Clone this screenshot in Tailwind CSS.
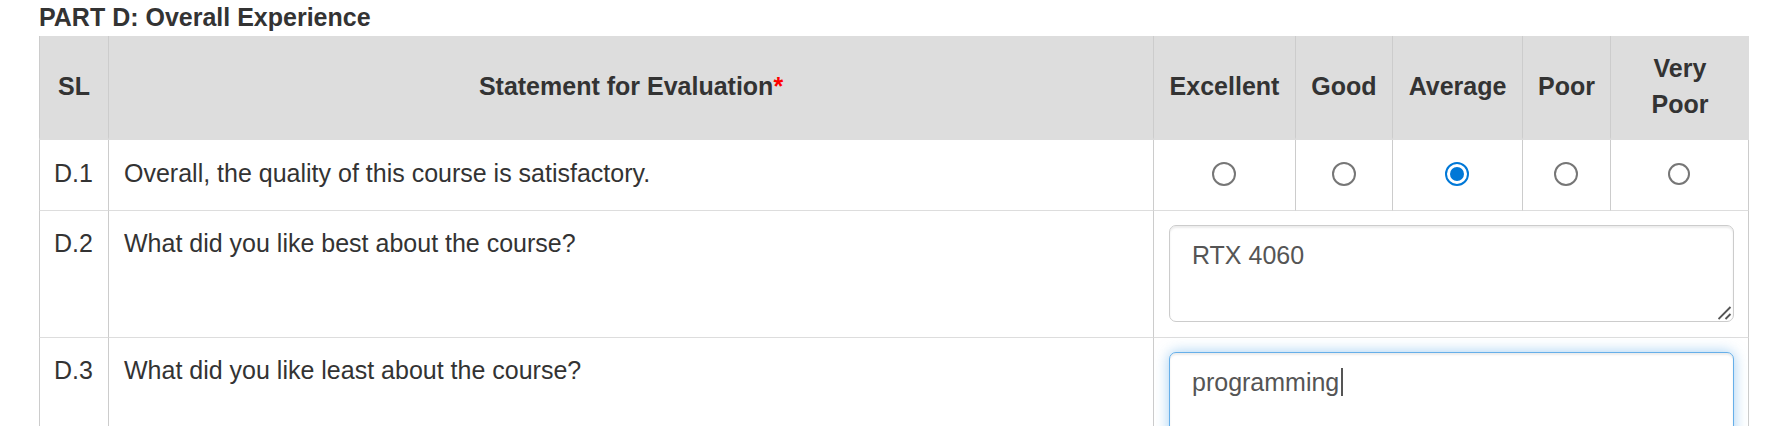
<!DOCTYPE html>
<html lang="en">
<head>
<meta charset="utf-8">
<title>Course Evaluation</title>
<script src="https://cdn.jsdelivr.net/npm/@tailwindcss/browser@4"></script>
</head>
<body class="h-screen overflow-hidden bg-white font-['Liberation_Sans',Arial,sans-serif] text-[25px] leading-9 text-[#333]">
<form class="pr-[41px] pl-[39px]">
  <h2 class="pb-0.5 leading-[34px] font-bold">PART D: Overall Experience</h2>
  <table class="w-full table-fixed border-separate border-spacing-0">
    <colgroup>
      <col class="w-[69px]"><col><col class="w-[142px]"><col class="w-[97px]"><col class="w-[130px]"><col class="w-[88px]"><col class="w-[139px]">
    </colgroup>
    <thead class="bg-[#ddd]">
      <tr>
        <th class="border-b-[3px] border-l border-b-[#ddd] border-l-[#ccc] pt-3.5 pb-[15px]">SL</th>
        <th class="border-b-[3px] border-l border-b-[#ddd] border-l-[#ccc] pt-3.5 pb-[15px]">Statement for Evaluation<span class="text-[#f00]">*</span></th>
        <th id="excellent" class="border-b-[3px] border-l border-b-[#ddd] border-l-[#ccc] pt-3.5 pb-[15px]">Excellent</th>
        <th id="good" class="border-b-[3px] border-l border-b-[#ddd] border-l-[#ccc] pt-3.5 pb-[15px]">Good</th>
        <th id="average" class="border-b-[3px] border-l border-b-[#ddd] border-l-[#ccc] pt-3.5 pb-[15px]">Average</th>
        <th id="poor" class="border-b-[3px] border-l border-b-[#ddd] border-l-[#ccc] pt-3.5 pb-[15px]">Poor</th>
        <th id="very-poor" class="border-b-[3px] border-l border-b-[#ddd] border-l-[#ccc] px-[15px] pt-3.5 pb-[15px]">Very Poor</th>
      </tr>
    </thead>
    <tbody class="align-top">
      <tr>
        <td class="border-b border-l border-b-[#ddd] border-l-[#ccc] pt-[15px] pb-[19px] pl-3.5">D.1</td>
        <td class="border-b border-l border-b-[#ddd] border-l-[#ccc] pt-[15px] pb-[19px] pl-[15px]">Overall, the quality of this course is satisfactory.</td>
        <td class="border-b border-l border-b-[#ddd] border-l-[#ccc] pr-px pb-0.5 align-middle"><input type="radio" name="d1" aria-labelledby="excellent" class="mx-auto block size-6 appearance-none rounded-full border-2 border-[#767676]"></td>
        <td class="border-b border-l border-b-[#ddd] border-l-[#ccc] pr-px pb-0.5 align-middle"><input type="radio" name="d1" aria-labelledby="good" class="mx-auto block size-6 appearance-none rounded-full border-2 border-[#767676]"></td>
        <td class="border-b border-l border-b-[#ddd] border-l-[#ccc] pr-px pb-0.5 align-middle"><input type="radio" name="d1" aria-labelledby="average" checked class="mx-auto block size-6 appearance-none rounded-full border-2 border-[#0078d7] bg-[#0078d7] bg-clip-content p-[3px]"></td>
        <td class="border-b border-l border-b-[#ddd] border-l-[#ccc] pr-px pb-0.5 align-middle"><input type="radio" name="d1" aria-labelledby="poor" class="mx-auto block size-6 appearance-none rounded-full border-2 border-[#767676]"></td>
        <td class="border-x border-b border-x-[#ccc] border-b-[#ddd] pr-px pb-0.5 align-middle"><input type="radio" name="d1" aria-labelledby="very-poor" class="mx-auto block size-[22px] appearance-none rounded-full border-2 border-[#767676]"></td>
      </tr>
      <tr>
        <td class="border-b border-l border-b-[#ddd] border-l-[#ccc] pt-3.5 pl-3.5">D.2</td>
        <td class="border-b border-l border-b-[#ddd] border-l-[#ccc] pt-3.5 pl-[15px]"><label for="best">What did you like best about the course?</label></td>
        <td colspan="5" class="border-x border-b border-x-[#ccc] border-b-[#ddd] pt-3.5 pr-3.5 pb-[15px] pl-[15px]">
          <div class="relative">
            <textarea id="best" class="block h-[97px] w-full resize-none overflow-hidden rounded-[7px] border border-[#ccc] bg-white px-[22px] py-[11px] text-[#555] shadow-[inset_0_2px_2px_rgba(0,0,0,0.075)]">RTX 4060</textarea>
            <svg class="absolute right-0.5 bottom-0.5" width="14" height="14" viewBox="0 0 14 14" fill="none" stroke="#555" stroke-width="1.9" aria-hidden="true"><path d="M.5 13 12.5 1M7.5 13 12.5 8"/></svg>
          </div>
        </td>
      </tr>
      <tr>
        <td class="border-b border-l border-b-[#ddd] border-l-[#ccc] pt-3.5 pl-3.5">D.3</td>
        <td class="border-b border-l border-b-[#ddd] border-l-[#ccc] pt-3.5 pl-[15px]"><label for="least">What did you like least about the course?</label></td>
        <td colspan="5" class="border-x border-b border-x-[#ccc] border-b-[#ddd] pt-3.5 pr-3.5 pb-[15px] pl-[15px]">
          <div class="relative">
            <textarea id="least" class="block h-[97px] w-full resize-none overflow-hidden rounded-[7px] border border-[#66afe9] bg-white px-[22px] py-[11px] text-[#555] shadow-[inset_0_2px_2px_rgba(0,0,0,0.075),0_0_14px_rgba(102,175,233,0.6)]">programming</textarea>
            <span class="absolute top-4 left-[172px] h-7 w-0.5 bg-[#555]"></span>
          </div>
        </td>
      </tr>
    </tbody>
  </table>
</form>
</body>
</html>
